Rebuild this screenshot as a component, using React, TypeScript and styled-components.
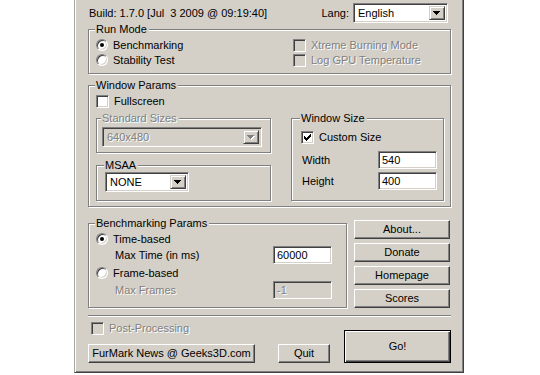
import styled, { createGlobalStyle, css } from 'styled-components'

const FACE = '#d4d0c8'
const SHADOW = '#808080'
const DARK = '#404040'
const LIGHT = '#ffffff'

const GlobalStyle = createGlobalStyle`
  html, body { margin: 0; padding: 0; background: #fff; }
  body {
    font-family: "Liberation Sans", Arial, sans-serif;
    font-size: 11px;
    line-height: 13px;
    color: #000;
  }
`

const disabledText = css`
  color: ${SHADOW};
  text-shadow: 1px 1px 0 ${LIGHT};
`

const Window = styled.div`
  display: flex;
  flex-direction: column;
  box-sizing: border-box;
  width: 390px;
  height: 373px;
  margin-left: 74px;
  padding: 3px 12px 0 13px;
  background: ${FACE};
  border-left: 1px solid #a8a6a0;
  border-right: 1px solid ${DARK};
  border-bottom: 1px solid ${DARK};
  box-shadow: inset 1px 0 0 ${LIGHT}, inset -1px -1px 0 ${SHADOW};
`

const Header = styled.div`
  display: flex;
  align-items: center;
  height: 20px;
  padding: 0 3px 0 1px;
`

const BuildText = styled.span`
  flex: 1;
  white-space: pre;
`

const LangLabel = styled.span`
  margin-right: 4px;
`

const Text = styled.span<{ $disabled?: boolean }>`
  white-space: nowrap;
  ${p => p.$disabled && disabledText}
`

/* ---- group boxes ---- */

const Group = styled.fieldset<{ $pad: string }>`
  margin: 0;
  min-width: 0;
  box-sizing: border-box;
  padding: ${p => p.$pad};
  border: 1px solid ${SHADOW};
  box-shadow: inset 1px 1px 0 ${LIGHT}, 1px 1px 0 ${LIGHT};
`

const Legend = styled.legend<{ $disabled?: boolean }>`
  margin-left: -1px;
  padding: 0 2px 0 1px;
  line-height: 13px;
  background: ${FACE};
  ${p => p.$disabled && disabledText}
`

/* ---- combo box ---- */

const Combo = styled.div<{ $w: number; $disabled?: boolean }>`
  display: flex;
  align-items: center;
  box-sizing: border-box;
  width: ${p => p.$w}px;
  height: 20px;
  padding: 2px;
  border: 1px solid;
  border-color: ${SHADOW} ${LIGHT} ${LIGHT} ${SHADOW};
  box-shadow: inset 1px 1px 0 ${DARK}, inset -1px -1px 0 ${FACE};
  background: ${p => (p.$disabled ? FACE : LIGHT)};
`

const ComboText = styled.span<{ $disabled?: boolean }>`
  flex: 1;
  padding-left: 2px;
  ${p => p.$disabled && disabledText}
`

const DropButton = styled.span`
  display: flex;
  align-items: center;
  justify-content: center;
  box-sizing: border-box;
  width: 16px;
  height: 100%;
  border: 1px solid;
  border-color: ${FACE} ${DARK} ${DARK} ${FACE};
  box-shadow: inset 1px 1px 0 ${LIGHT}, inset -1px -1px 0 ${SHADOW};
  background: ${FACE};
`

function Arrow({ disabled }: { disabled?: boolean }) {
  const d = 'M0 0h7v1h-1v1h-1v1h-1v1h-1v-1h-1v-1h-1v-1h-1z'
  return (
    <svg width="8" height="5" viewBox="0 0 8 5">
      {disabled && <path d={d} transform="translate(1 1)" fill={LIGHT} />}
      <path d={d} fill={disabled ? SHADOW : '#000'} />
    </svg>
  )
}

function ComboBox({ width, value, disabled }: { width: number; value: string; disabled?: boolean }) {
  return (
    <Combo $w={width} $disabled={disabled}>
      <ComboText $disabled={disabled}>{value}</ComboText>
      <DropButton>
        <Arrow disabled={disabled} />
      </DropButton>
    </Combo>
  )
}

/* ---- check boxes / radios ---- */

const OptionRow = styled.div<{ $h?: number }>`
  display: flex;
  align-items: center;
  gap: 5px;
  height: ${p => p.$h ?? 15}px;
`

const CheckBox = styled.span<{ $disabled?: boolean }>`
  display: flex;
  align-items: center;
  justify-content: center;
  flex: none;
  box-sizing: border-box;
  width: 13px;
  height: 13px;
  border: 1px solid;
  border-color: ${SHADOW} ${LIGHT} ${LIGHT} ${SHADOW};
  box-shadow: inset 1px 1px 0 ${DARK}, inset -1px -1px 0 ${FACE};
  background: ${p => (p.$disabled ? FACE : LIGHT)};
`

const RadioDot = styled.span<{ $checked?: boolean }>`
  display: flex;
  align-items: center;
  justify-content: center;
  flex: none;
  box-sizing: border-box;
  width: 12px;
  height: 12px;
  border-radius: 50%;
  border: 1px solid;
  border-color: ${SHADOW} ${LIGHT} ${LIGHT} ${SHADOW};
  box-shadow: inset 1px 1px 0 ${DARK}, inset -1px -1px 0 ${FACE};
  background: ${LIGHT};

  &::after {
    content: '';
    display: ${p => (p.$checked ? 'block' : 'none')};
    width: 4px;
    height: 4px;
    border-radius: 50%;
    background: #000;
  }
`

function CheckMark() {
  return (
    <svg width="7" height="7" viewBox="0 0 7 7">
      <path d="M0 2h1v3H0zM1 3h1v3H1zM2 4h1v3H2zM3 3h1v3H3zM4 2h1v3H4zM5 1h1v3H5zM6 0h1v3H6z" fill="#000" />
    </svg>
  )
}

function Check({ label, checked, disabled }: { label: string; checked?: boolean; disabled?: boolean }) {
  return (
    <OptionRow>
      <CheckBox $disabled={disabled}>{checked && <CheckMark />}</CheckBox>
      <Text $disabled={disabled}>{label}</Text>
    </OptionRow>
  )
}

function Radio({ label, checked }: { label: string; checked?: boolean }) {
  return (
    <OptionRow $h={14}>
      <RadioDot $checked={checked} />
      <Text>{label}</Text>
    </OptionRow>
  )
}

/* ---- edits and buttons ---- */

const Edit = styled.div<{ $disabled?: boolean }>`
  display: flex;
  align-items: center;
  box-sizing: border-box;
  width: 59px;
  height: 18px;
  padding: 0 3px;
  border: 1px solid;
  border-color: ${SHADOW} ${LIGHT} ${LIGHT} ${SHADOW};
  box-shadow: inset 1px 1px 0 ${DARK}, inset -1px -1px 0 ${FACE};
  background: ${p => (p.$disabled ? FACE : LIGHT)};
  ${p => p.$disabled && disabledText}
`

const Button = styled.div<{ $w?: number; $h?: number; $default?: boolean }>`
  display: flex;
  align-items: center;
  justify-content: center;
  box-sizing: border-box;
  width: ${p => (p.$w ? `${p.$w}px` : 'auto')};
  height: ${p => p.$h ?? 19}px;
  background: ${FACE};
  border: 1px solid;
  ${p =>
    p.$default
      ? css`
          border-color: #000;
          box-shadow: inset 1px 1px 0 ${LIGHT}, inset -1px -1px 0 ${DARK}, inset -2px -2px 0 ${SHADOW};
        `
      : css`
          border-color: ${LIGHT} ${DARK} ${DARK} ${LIGHT};
          box-shadow: inset -1px -1px 0 ${SHADOW};
        `}
`

/* ---- layout ---- */

const RunModeGrid = styled.div`
  display: grid;
  grid-template-columns: 197px 1fr;
`

const Column = styled.div<{ $gap: number }>`
  display: flex;
  flex-direction: column;
  gap: ${p => p.$gap}px;
`

const ParamsGrid = styled.div`
  display: grid;
  grid-template-columns: 175px 153px;
  column-gap: 20px;
  margin-top: 3px;
`

const SizeGrid = styled.div`
  display: grid;
  grid-template-columns: 77px 59px;
  row-gap: 3px;
  align-items: center;
  margin-top: 6px;
`

const SizeLabel = styled.span`
  padding-left: 1px;
`

const Stack = styled.div<{ $top: number }>`
  margin-top: ${p => p.$top}px;
`

const BenchRow = styled.div`
  display: grid;
  grid-template-columns: 259px 96px;
  column-gap: 7px;
  margin-top: 10px;
`

const FieldRow = styled.div<{ $top?: number }>`
  display: flex;
  align-items: center;
  height: 18px;
  margin-top: ${p => p.$top ?? 0}px;
`

const FieldLabel = styled.span<{ $disabled?: boolean }>`
  box-sizing: border-box;
  width: 177px;
  padding-left: 19px;
  ${p => p.$disabled && disabledText}
`

const SideButtons = styled.div`
  display: flex;
  flex-direction: column;
  gap: 4px;
  margin-top: 3px;
`

const Separator = styled.div`
  height: 0;
  margin-top: 7px;
  border-top: 1px solid ${SHADOW};
  border-bottom: 1px solid ${LIGHT};
`

const Footer = styled.div`
  display: grid;
  grid-template-columns: 1fr 107px;
  margin-top: 5px;
`

const FooterLeft = styled.div`
  display: flex;
  flex-direction: column;
  gap: 9px;
`

const PostRow = styled.div`
  padding-left: 3px;
`

const ButtonRow = styled.div`
  display: flex;
  gap: 23px;
`

const GoCell = styled.div`
  align-self: end;
`

export default function App() {
  return (
    <>
      <GlobalStyle />
      <Window>
        <Header>
          <BuildText>Build: 1.7.0 [Jul  3 2009 @ 09:19:40]</BuildText>
          <LangLabel>Lang:</LangLabel>
          <ComboBox width={95} value="English" />
        </Header>

        <Group $pad="2px 6px 5px 7px">
          <Legend>Run Mode</Legend>
          <RunModeGrid>
            <Column $gap={1}>
              <Radio label="Benchmarking" checked />
              <Radio label="Stability Test" />
            </Column>
            <Column $gap={0}>
              <Check label="Xtreme Burning Mode" disabled />
              <Check label="Log GPU Temperature" disabled />
            </Column>
          </RunModeGrid>
        </Group>

        <Stack $top={5}>
          <Group $pad="2px 5px 5px 7px">
            <Legend>Window Params</Legend>
            <Check label="Fullscreen" />
            <ParamsGrid>
              <Column $gap={6}>
                <Group $pad="2px 8px 5px 5px">
                  <Legend $disabled>Standard Sizes</Legend>
                  <ComboBox width={160} value="640x480" disabled />
                </Group>
                <Group $pad="0 8px 8px 8px">
                  <Legend>MSAA</Legend>
                  <ComboBox width={84} value="NONE" />
                </Group>
              </Column>
              <Group $pad="5px 6px 5px 9px">
                <Legend>Window Size</Legend>
                <Check label="Custom Size" checked />
                <SizeGrid>
                  <SizeLabel>Width</SizeLabel>
                  <Edit>540</Edit>
                  <SizeLabel>Height</SizeLabel>
                  <Edit>400</Edit>
                </SizeGrid>
              </Group>
            </ParamsGrid>
          </Group>
        </Stack>

        <BenchRow>
          <Group $pad="2px 6px 7px 7px">
            <Legend>Benchmarking Params</Legend>
            <Radio label="Time-based" checked />
            <FieldRow>
              <FieldLabel>Max Time (in ms)</FieldLabel>
              <Edit>60000</Edit>
            </FieldRow>
            <Stack $top={2}>
              <Radio label="Frame-based" />
            </Stack>
            <FieldRow $top={1}>
              <FieldLabel $disabled>Max Frames</FieldLabel>
              <Edit $disabled>-1</Edit>
            </FieldRow>
          </Group>
          <SideButtons>
            <Button>About...</Button>
            <Button>Donate</Button>
            <Button>Homepage</Button>
            <Button>Scores</Button>
          </SideButtons>
        </BenchRow>

        <Separator />

        <Footer>
          <FooterLeft>
            <PostRow>
              <OptionRow $h={13}>
                <CheckBox $disabled />
                <Text $disabled>Post-Processing</Text>
              </OptionRow>
            </PostRow>
            <ButtonRow>
              <Button $w={167}>FurMark News @ Geeks3D.com</Button>
              <Button $w={52}>Quit</Button>
            </ButtonRow>
          </FooterLeft>
          <GoCell>
            <Button $h={33} $default>Go!</Button>
          </GoCell>
        </Footer>
      </Window>
    </>
  )
}
